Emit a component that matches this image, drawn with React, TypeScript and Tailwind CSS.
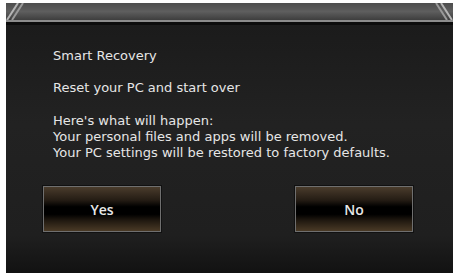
import React from "react";

const lines = [
  "Here's what will happen:",
  "Your personal files and apps will be removed.",
  "Your PC settings will be restored to factory defaults.",
];

function Corner({ flip }: { flip?: boolean }) {
  return (
    <svg width="18" height="17" viewBox="0 0 18 17" className={flip ? "-scale-x-100" : ""}>
      <path d="M1 17 L12 0" stroke="#b5b5b5" strokeWidth="2" />
      <path d="M6 17 L17 0" stroke="#9a9a9a" strokeWidth="2" />
    </svg>
  );
}

function DlgButton({ label }: { label: string }) {
  return (
    <button
      className="w-[118px] h-[46px] border border-[#6f6f6f] shadow-[0_0_0_1px_#111] bg-[linear-gradient(to_bottom,#4a3c2c_0%,#241c14_30%,#000_45%,#000_62%,#1e170f_75%,#4a3a26_100%)] flex items-center justify-center text-[14px] text-[#e8e8e8] font-semibold"
      style={{ fontFamily: "'Open Sans', sans-serif" }}
    >
      {label}
    </button>
  );
}

export default function App() {
  return (
    <div className="w-[453px] h-[273px] bg-white pl-[6px] pt-[3px] overflow-hidden" style={{ fontFamily: "'DejaVu Sans', Verdana, sans-serif" }}>
      <div className="h-full flex flex-col">
        {/* title strip */}
        <div className="h-[17px] flex justify-between bg-[linear-gradient(to_bottom,#4d4d4d,#5e5e5e_50%,#3e3e3e)]">
          <Corner />
          <Corner flip />
        </div>
        <div className="h-[2px] bg-[#8c8c8c]" />
        <div className="h-[3px] bg-[#0c0c0c]" />

        {/* body */}
        <div className="flex-1 flex flex-col bg-[linear-gradient(to_bottom,#1b1b1b,#222_40%,#1f1f1f_85%,#121212)]">
          <div className="pl-[47px] pt-[23px] text-[13px] leading-[16px] text-[#e6e6e6]">
            <p>Smart Recovery</p>
            <p className="mt-4">Reset your PC and start over</p>
            <div className="mt-[17px]">
              {lines.map((l) => (
                <p key={l}>{l}</p>
              ))}
            </div>
          </div>
          <div className="flex gap-[134px] pl-[37px] mt-[25px]">
            <DlgButton label="Yes" />
            <DlgButton label="No" />
          </div>
        </div>
      </div>
    </div>
  );
}
